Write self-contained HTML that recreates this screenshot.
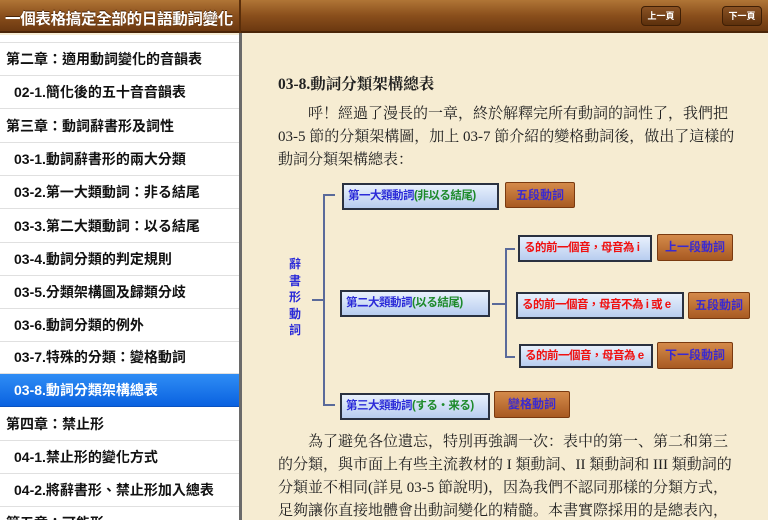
<!DOCTYPE html>
<html><head><meta charset="utf-8"><style>
*{margin:0;padding:0;box-sizing:border-box}
body{width:768px;height:520px;overflow:hidden;position:relative;font-family:"Liberation Sans","Noto Sans CJK TC",sans-serif;background:#f6ecd4}
#hdr{position:absolute;left:0;top:0;width:768px;height:33px;background:linear-gradient(#b07536,#8a4f1c 50%,#6b3810);border-bottom:2px solid #4a2508}
#hdr .t{position:absolute;left:5px;top:7px;color:#fff;font-weight:bold;font-size:15.5px;letter-spacing:-0.3px;white-space:nowrap;text-shadow:0 -1px 0 #4a2508}
#hdr .sep{position:absolute;left:239px;top:0;width:2px;height:33px;background:#5a2e0a}
.nb{position:absolute;top:6px;height:20px;width:40px;border:1px solid #3f1f05;border-radius:4px;background:linear-gradient(#8a5224,#5c300c);color:#fff;font-size:9px;font-weight:bold;text-align:center;line-height:18px}
#side{position:absolute;left:0;top:35px;width:239px;height:485px;background:#fff;overflow:hidden}
.r{position:absolute;left:0;width:239px;height:33px;border-bottom:1px solid #e0e0e0;font-size:14px;line-height:33px;color:#111;white-space:nowrap;font-weight:bold}
.r.c{padding-left:6px}
.r.s{padding-left:14px}
.r.sel{background:linear-gradient(#2f8df5,#0a62e0);color:#fff;border-bottom:1px solid #0a52c0}
#div{position:absolute;left:239px;top:33px;width:3px;height:487px;background:#6a6a6a}
#main{position:absolute;left:242px;top:35px;width:526px;height:485px;background:#f6ecd2}
.tx{position:absolute;left:278px;font-family:"Liberation Serif","Noto Serif CJK SC",serif;font-size:15px;color:#222;white-space:nowrap}
.bx{position:absolute;background:linear-gradient(#e8f0fc,#b8cdef);border:2px solid #2a3140;font-weight:bold;font-size:11.5px;line-height:22px;color:#2a2ad8;white-space:nowrap;overflow:hidden;padding-left:4px;letter-spacing:-0.5px}
.bx .g{color:#1d8a2a}
.bx.red{color:#f01010}
.bt{position:absolute;background:linear-gradient(#d48a4a,#a85a22);border:1px solid #7a3a10;border-radius:2px;font-size:12px;color:#3a2ad0;text-align:center;font-weight:bold;white-space:nowrap;overflow:hidden}
.ln{position:absolute;background:#5a6a9a}
</style></head><body>
<div id="hdr"><div class="t">一個表格搞定全部的日語動詞變化</div><div class="sep"></div>
<div class="nb" style="left:641px">上一頁</div><div class="nb" style="left:722px">下一頁</div></div>
<div id="side">
<div class="r c" style="top:-25px">第一章</div>
<div class="r c" style="top:8px">第二章：適用動詞變化的音韻表</div>
<div class="r s" style="top:41px">02-1.簡化後的五十音音韻表</div>
<div class="r c" style="top:75px">第三章：動詞辭書形及詞性</div>
<div class="r s" style="top:108px">03-1.動詞辭書形的兩大分類</div>
<div class="r s" style="top:141px">03-2.第一大類動詞：非る結尾</div>
<div class="r s" style="top:175px">03-3.第二大類動詞：以る結尾</div>
<div class="r s" style="top:208px">03-4.動詞分類的判定規則</div>
<div class="r s" style="top:241px">03-5.分類架構圖及歸類分歧</div>
<div class="r s" style="top:274px">03-6.動詞分類的例外</div>
<div class="r s" style="top:306px">03-7.特殊的分類：變格動詞</div>
<div class="r s sel" style="top:339px">03-8.動詞分類架構總表</div>
<div class="r c" style="top:373px">第四章：禁止形</div>
<div class="r s" style="top:406px">04-1.禁止形的變化方式</div>
<div class="r s" style="top:439px">04-2.將辭書形、禁止形加入總表</div>
<div class="r c" style="top:472px">第五章：可能形</div>
</div>
<div id="div"></div>
<div id="main"></div>
<div class="tx" style="top:72px;font-weight:bold;font-size:15.5px">03-8.動詞分類架構總表</div>
<div class="tx" style="top:102px">　　呼！經過了漫長的一章，終於解釋完所有動詞的詞性了，我們把</div>
<div class="tx" style="top:125px">03-5 節的分類架構圖，加上 03-7 節介紹的變格動詞後，做出了這樣的</div>
<div class="tx" style="top:148px">動詞分類架構總表：</div>
<div class="ln" style="left:323px;top:194px;width:2px;height:212px"></div>
<div class="ln" style="left:323px;top:194px;width:12px;height:2px"></div>
<div class="ln" style="left:323px;top:404px;width:12px;height:2px"></div>
<div class="ln" style="left:312px;top:299px;width:12px;height:2px"></div>
<div class="ln" style="left:505px;top:248px;width:2px;height:110px"></div>
<div class="ln" style="left:505px;top:248px;width:10px;height:2px"></div>
<div class="ln" style="left:505px;top:356px;width:10px;height:2px"></div>
<div class="ln" style="left:492px;top:303px;width:14px;height:2px"></div>
<div style="position:absolute;left:289px;top:256px;width:14px;font-size:12px;line-height:16.5px;color:#2a2ad8;font-weight:bold">辭書形動詞</div>
<div class="bx" style="left:342px;top:183px;width:157px;height:27px">第一大類動詞<span class="g">(非以る結尾)</span></div>
<div class="bt" style="left:505px;top:182px;width:70px;height:26px;line-height:24px">五段動詞</div>
<div class="bx" style="left:340px;top:290px;width:150px;height:27px">第二大類動詞<span class="g">(以る結尾)</span></div>
<div class="bx red" style="left:518px;top:235px;width:134px;height:27px">る的前一個音，母音為 i</div>
<div class="bt" style="left:657px;top:234px;width:76px;height:27px;line-height:25px">上一段動詞</div>
<div class="bx red" style="left:516px;top:292px;width:168px;height:27px">る的前一個音，母音不為 i 或 e</div>
<div class="bt" style="left:688px;top:292px;width:62px;height:27px;line-height:25px">五段動詞</div>
<div class="bx red" style="left:519px;top:344px;width:134px;height:24px;line-height:20px">る的前一個音，母音為 e</div>
<div class="bt" style="left:657px;top:342px;width:76px;height:27px;line-height:25px">下一段動詞</div>
<div class="bx" style="left:340px;top:393px;width:150px;height:27px">第三大類動詞<span class="g">(する‧来る)</span></div>
<div class="bt" style="left:494px;top:391px;width:76px;height:27px;line-height:25px">變格動詞</div>
<div class="tx" style="top:430px">　　為了避免各位遺忘，特別再強調一次：表中的第一、第二和第三</div>
<div class="tx" style="top:453px">的分類，與市面上有些主流教材的 I 類動詞、II 類動詞和 III 類動詞的</div>
<div class="tx" style="top:476px">分類並不相同(詳見 03-5 節說明)，因為我們不認同那樣的分類方式，</div>
<div class="tx" style="top:499px">足夠讓你直接地體會出動詞變化的精髓。本書實際採用的是總表內，</div>
</body></html>
